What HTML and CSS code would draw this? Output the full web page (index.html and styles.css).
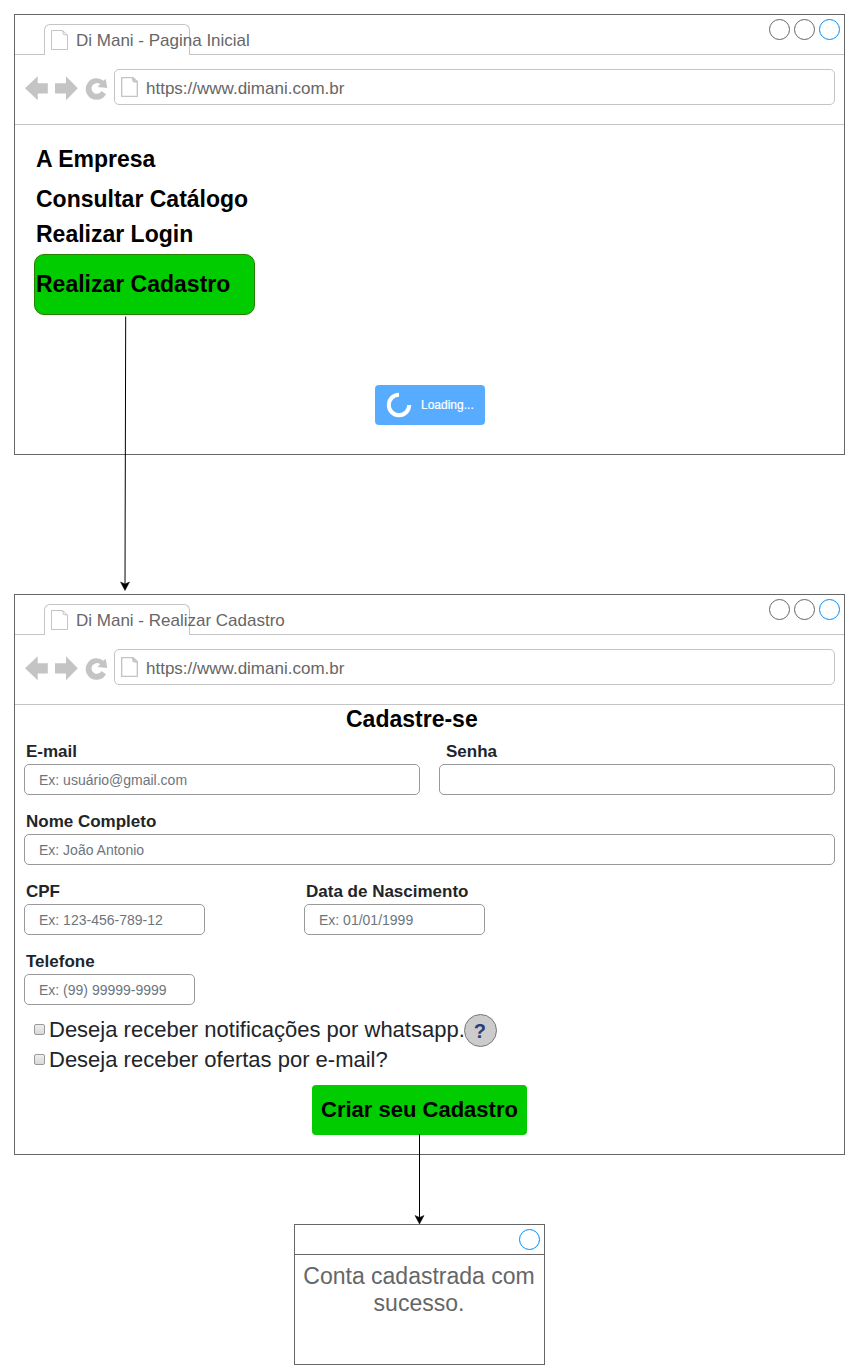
FILE: index.html
```html
<!DOCTYPE html>
<html lang="pt-BR">
<head>
<meta charset="utf-8">
<title>Di Mani</title>
<link rel="stylesheet" href="styles.css">
</head>
<body>
<svg class="defs" width="0" height="0">
  <symbol id="page" viewBox="0 0 17 20"><path d="M.5 .5H11.500L16.500 5V19.500H.5ZM11.500 .5L12.500 4.500L16.500 5" fill="none" stroke="currentColor"/></symbol>
  <symbol id="nav" viewBox="0 0 84 26">
    <path d="M0 13.200L12.700 1.200V8.300H22.800V18.600H12.700V25.200Z"/>
    <path d="M52.800 13.200L41 1.200V8.300H30V18.600H41V25.200Z"/>
    <path d="M80.700 3.800L82.300 12.900L72.500 11.900L75.200 9.300A5.300 5.300 0 1 0 76.500 16L81 19.200A10.800 10.800 0 1 1 78.500 5.800Z"/>
  </symbol>
</svg>
<main class="flow">
  <section class="window home">
    <header class="titlebar">
      <div class="tab"><svg class="page"><use href="#page"/></svg><span>Di Mani - Pagina Inicial</span></div>
      <div class="controls"><i></i><i></i><i class="blue"></i></div>
    </header>
    <div class="toolbar">
      <svg class="nav"><use href="#nav"/></svg>
      <div class="address"><svg class="page bold"><use href="#page"/></svg><span>https://www.dimani.com.br</span></div>
    </div>
    <nav class="menu">
      <a class="first">A Empresa</a>
      <a class="second">Consultar Catálogo</a>
      <a>Realizar Login</a>
      <a class="selected">Realizar Cadastro</a>
    </nav>
    <div class="loading">
      <svg width="26" height="26" viewBox="0 0 26 26"><path d="M13 2.800A10.200 10.200 0 1 0 23.200 13" fill="none" stroke="#fff" stroke-width="4"/></svg>
      <span>Loading...</span>
    </div>
  </section>

  <section class="window signup">
    <header class="titlebar">
      <div class="tab"><svg class="page"><use href="#page"/></svg><span>Di Mani - Realizar Cadastro</span></div>
      <div class="controls"><i></i><i></i><i class="blue"></i></div>
    </header>
    <div class="toolbar">
      <svg class="nav"><use href="#nav"/></svg>
      <div class="address"><svg class="page bold"><use href="#page"/></svg><span>https://www.dimani.com.br</span></div>
    </div>
    <h1 class="title">Cadastre-se</h1>
    <form class="form">
      <div class="row">
        <div class="field half"><label>E-mail</label><div class="input">Ex: usuário@gmail.com</div></div>
        <div class="field half"><label>Senha</label><div class="input"></div></div>
      </div>
      <div class="row">
        <div class="field full"><label>Nome Completo</label><div class="input">Ex: João Antonio</div></div>
      </div>
      <div class="row spaced">
        <div class="field short"><label>CPF</label><div class="input">Ex: 123-456-789-12</div></div>
        <div class="field short"><label>Data de Nascimento</label><div class="input">Ex: 01/01/1999</div></div>
      </div>
      <div class="row">
        <div class="field phone"><label>Telefone</label><div class="input">Ex: (99) 99999-9999</div></div>
      </div>
      <div class="check"><i class="box"></i><span>Deseja receber notificações por whatsapp.</span><b class="help">?</b></div>
      <div class="check"><i class="box"></i><span>Deseja receber ofertas por e-mail?</span></div>
      <div class="submit">Criar seu Cadastro</div>
    </form>
  </section>

  <section class="window dialog">
    <header class="dialog-bar"><div class="controls"><i class="blue"></i></div></header>
    <p>Conta cadastrada com sucesso.</p>
  </section>

  <svg class="connectors" width="852" height="1371">
    <path d="M125.700 316.500L125 584M419.500 1134V1218" fill="none" stroke="#000"/>
    <path d="M125 590.500L120.500 582L125 584L129.500 582ZM419.500 1224L415 1215.500L419.500 1217.500L424 1215.500Z" stroke="#000" stroke-width=".5"/>
  </svg>
</main>
</body>
</html>
```
FILE: styles.css
```css
* { box-sizing: border-box; }
body { margin: 0; background: #fff; font-family: "Liberation Sans", Arial, sans-serif; color: #000; }
.defs { position: absolute; }
.flow { position: relative; width: 852px; height: 1371px; padding: 14px 0 0 14px; }
.window { width: 831px; border: 1px solid #666; background: #fff; }
.home { height: 441px; }
.signup { height: 561px; margin-top: 139px; }
.connectors { position: absolute; left: 0; top: 0; pointer-events: none; }

.titlebar { display: flex; justify-content: space-between; height: 40px; padding: 0 4px 0 29px; border-bottom: 1px solid #c4c4c4; }
.tab { display: flex; align-items: center; width: 146px; height: 31px; margin-top: 9px; padding-left: 6px; border: 1px solid #c4c4c4; border-bottom: 0; border-radius: 6px 6px 0 0; background: #fff; color: #666; font-size: 17px; white-space: nowrap; }
.tab span { margin: 2px 0 0 8px; }
.page { flex: none; width: 17px; height: 20px; color: #c4c4c4; overflow: visible; }
.page.bold { width: 17px; height: 20px; stroke-width: 1.7; }
.controls { display: flex; gap: 4px; padding-top: 4px; }
.controls i { width: 21px; height: 21px; border: 1px solid #666; border-radius: 50%; }
.controls .blue { border-color: #008cff; }
.toolbar { display: flex; height: 70px; padding: 14px 9px 0 10px; border-bottom: 1px solid #c4c4c4; }
.nav { flex: none; width: 84px; height: 26px; margin-top: 6px; fill: #c4c4c4; }
.address { display: flex; align-items: center; flex: 1; height: 36px; margin-left: 5px; padding-left: 6px; border: 1px solid #c4c4c4; border-radius: 5px; color: #666; font-size: 17px; }
.address span { margin: 3px 0 0 8px; }

.menu { display: flex; flex-direction: column; align-items: flex-start; padding: 14px 0 0 19px; font-size: 23px; font-weight: bold; }
.menu a { height: 30px; margin-bottom: 5px; padding-left: 2px; line-height: 40px; }
.menu .first { height: 40px; margin: 0; }
.menu .second { height: 35px; margin: 0; }
.menu .selected { width: 221px; height: 61px; margin: 5px 0 0; padding-left: 1px; border: 1px solid #267e00; border-radius: 10px; background: #00cc00; line-height: 59px; }
.loading { display: flex; align-items: center; width: 110px; height: 40px; margin: 69.500px 0 0 359.500px; padding-left: 11.500px; border-radius: 4px; background: #58acff; color: #fff; font-size: 12px; -webkit-text-stroke: .2px #fff; }
.loading span { margin-left: 9px; }

.title { height: 30px; margin: 0; padding-left: 331px; font-size: 23px; line-height: 29px; }
.home .loading + .title { margin: 0; }
.form { padding: 0 9px; color: #212529; }
.loading + .form { padding: 0; }
.row { display: flex; gap: 19px; height: 70px; }
.row.spaced { gap: 99px; }
.field label { display: block; height: 29px; padding-left: 2px; font-size: 17px; font-weight: bold; line-height: 33px; }
.field.half { width: 396px; }
.field.half + .half label { padding-left: 7px; }
.field.full { width: 811px; }
.field.short { width: 181px; }
.field.phone { width: 171px; }
.input { height: 31px; padding-left: 14px; border: 1px solid #999; border-radius: 5px; color: #6c757d; font-size: 14px; line-height: 30px; }
.check { display: flex; align-items: center; height: 30px; padding-left: 10px; font-size: 22px; }
.box { width: 11px; height: 11px; margin: -2px 4px 0 0; border: 1px solid #999; border-radius: 2px; background: linear-gradient(#eee, #d9d9d9); }
.help { width: 33px; height: 33px; margin-left: -1px; border: 1px solid #777; border-radius: 50%; background: #ccc; color: #27407a; font-size: 20px; line-height: 33px; text-align: center; }
.check .help { padding-right: 1px; }
.submit { width: 215px; height: 50px; margin: 9.500px 0 0 288px; border-radius: 4px; background: #00cc00; color: #000; font-size: 22px; font-weight: bold; line-height: 50px; text-align: center; }

.dialog { width: 251px; height: 141px; margin: 69px 0 0 280px; }
.dialog-bar { display: flex; justify-content: flex-end; height: 30px; padding-right: 4px; border-bottom: 1px solid #666; }
.dialog p { margin: 8px 1px 0 0; color: #666; font-size: 23px; line-height: 27px; text-align: center; }
```
